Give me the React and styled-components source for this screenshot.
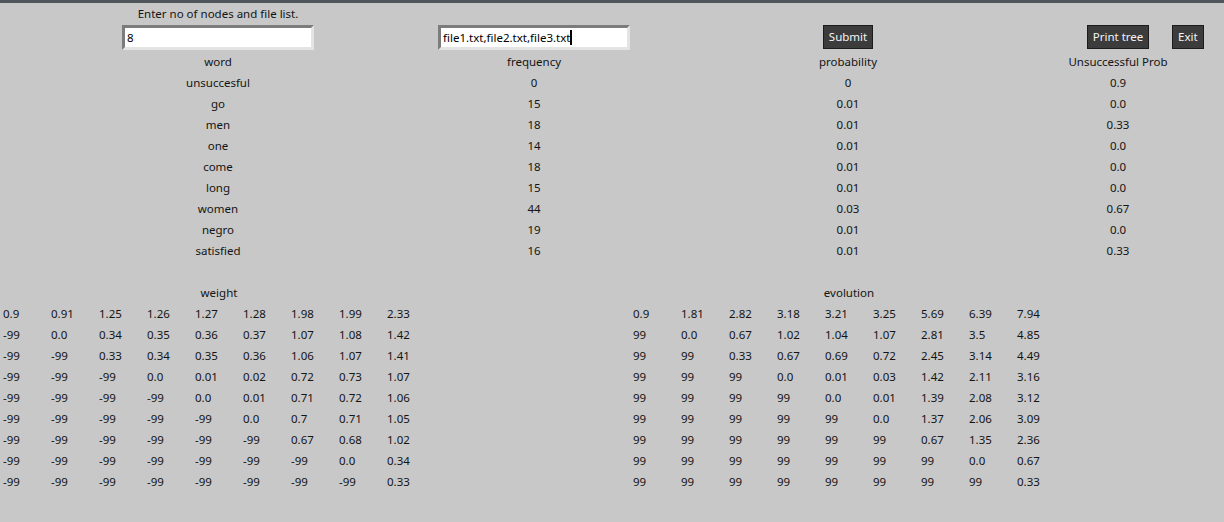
import React from 'react';
import styled, { createGlobalStyle } from 'styled-components';

const GlobalStyle = createGlobalStyle`
  html, body {
    margin: 0;
    padding: 0;
    background: #c8c8c8;
  }
  body {
    font-family: "Noto Sans", "Open Sans", "DejaVu Sans", sans-serif;
    font-size: 11.5px;
    color: #141414;
  }
`;

const Window = styled.div`
  width: 1224px;
  height: 522px;
  background: #c8c8c8;
  border-top: 3px solid #4f555b;
  box-sizing: border-box;
  overflow: hidden;
`;

const TopGrid = styled.div`
  display: grid;
  grid-template-columns: 436px 196px 432px 108px 1fr;
  grid-template-rows: 22px 26px;
  grid-auto-rows: 21px;
`;

const Cell = styled.div`
  display: flex;
  align-items: center;
  justify-content: center;
  white-space: nowrap;
  line-height: 1;
  grid-column: ${p => p.col || 'auto'};
`;

const Entry = styled.div`
  width: 184px;
  height: 19px;
  background: #fff;
  border: 3px solid;
  border-color: #7c7c7c #e4e4e4 #e4e4e4 #7c7c7c;
  display: flex;
  align-items: center;
  padding-left: 2px;
  box-sizing: content-box;
  font-size: 11.5px;
  color: #000;
  align-self: start;
`;

const Caret = styled.span`
  display: inline-block;
  width: 2px;
  height: 15px;
  background: #000;
`;

const Button = styled.div`
  background: #3c3c3c;
  color: #f4f4f4;
  border: 1px solid #1c1c1c;
  height: 24px;
  padding: 0 5px;
  display: flex;
  align-items: center;
  justify-content: center;
  box-sizing: border-box;
  font-size: 11.5px;
  line-height: 1;
  align-self: start;
`;

const ExitCell = styled.div`
  display: flex;
  align-items: flex-start;
  padding-left: 0;
`;

const Matrices = styled.div`
  display: grid;
  grid-template-columns: 432px 432px;
  column-gap: 198px;
  margin-top: 21px;
`;

const Matrix = styled.div`
  display: grid;
  grid-template-columns: repeat(9, 48px);
  grid-auto-rows: 21px;
`;

const MatrixTitle = styled.div`
  grid-column: 1 / -1;
  display: flex;
  align-items: center;
  justify-content: center;
  padding-left: 6px;
`;

const Num = styled.div`
  display: flex;
  align-items: center;
  padding-left: 3px;
  white-space: nowrap;
`;

const words = [
  ['unsuccesful', '0', '0', '0.9'],
  ['go', '15', '0.01', '0.0'],
  ['men', '18', '0.01', '0.33'],
  ['one', '14', '0.01', '0.0'],
  ['come', '18', '0.01', '0.0'],
  ['long', '15', '0.01', '0.0'],
  ['women', '44', '0.03', '0.67'],
  ['negro', '19', '0.01', '0.0'],
  ['satisfied', '16', '0.01', '0.33'],
];

const weight = [
  ['0.9', '0.91', '1.25', '1.26', '1.27', '1.28', '1.98', '1.99', '2.33'],
  ['-99', '0.0', '0.34', '0.35', '0.36', '0.37', '1.07', '1.08', '1.42'],
  ['-99', '-99', '0.33', '0.34', '0.35', '0.36', '1.06', '1.07', '1.41'],
  ['-99', '-99', '-99', '0.0', '0.01', '0.02', '0.72', '0.73', '1.07'],
  ['-99', '-99', '-99', '-99', '0.0', '0.01', '0.71', '0.72', '1.06'],
  ['-99', '-99', '-99', '-99', '-99', '0.0', '0.7', '0.71', '1.05'],
  ['-99', '-99', '-99', '-99', '-99', '-99', '0.67', '0.68', '1.02'],
  ['-99', '-99', '-99', '-99', '-99', '-99', '-99', '0.0', '0.34'],
  ['-99', '-99', '-99', '-99', '-99', '-99', '-99', '-99', '0.33'],
];

const evolution = [
  ['0.9', '1.81', '2.82', '3.18', '3.21', '3.25', '5.69', '6.39', '7.94'],
  ['99', '0.0', '0.67', '1.02', '1.04', '1.07', '2.81', '3.5', '4.85'],
  ['99', '99', '0.33', '0.67', '0.69', '0.72', '2.45', '3.14', '4.49'],
  ['99', '99', '99', '0.0', '0.01', '0.03', '1.42', '2.11', '3.16'],
  ['99', '99', '99', '99', '0.0', '0.01', '1.39', '2.08', '3.12'],
  ['99', '99', '99', '99', '99', '0.0', '1.37', '2.06', '3.09'],
  ['99', '99', '99', '99', '99', '99', '0.67', '1.35', '2.36'],
  ['99', '99', '99', '99', '99', '99', '99', '0.0', '0.67'],
  ['99', '99', '99', '99', '99', '99', '99', '99', '0.33'],
];

function NumberGrid({ title, rows }) {
  return (
    <Matrix>
      <MatrixTitle>{title}</MatrixTitle>
      {rows.map((row, i) =>
        row.map((v, j) => <Num key={`${i}-${j}`}>{v}</Num>)
      )}
    </Matrix>
  );
}

export default function App() {
  return (
    <Window>
      <GlobalStyle />
      <TopGrid>
        <Cell col="1">Enter no of nodes and file list.</Cell>
        <Cell col="2 / -1" />

        <Cell col="1"><Entry>8</Entry></Cell>
        <Cell col="2"><Entry>file1.txt,file2.txt,file3.txt<Caret /></Entry></Cell>
        <Cell col="3"><Button>Submit</Button></Cell>
        <Cell col="4"><Button>Print tree</Button></Cell>
        <ExitCell><Button>Exit</Button></ExitCell>

        <Cell col="1">word</Cell>
        <Cell col="2">frequency</Cell>
        <Cell col="3">probability</Cell>
        <Cell col="4">Unsuccessful Prob</Cell>
        <Cell col="5" />

        {words.map(w => (
          <React.Fragment key={w[0]}>
            <Cell col="1">{w[0]}</Cell>
            <Cell col="2">{w[1]}</Cell>
            <Cell col="3">{w[2]}</Cell>
            <Cell col="4">{w[3]}</Cell>
            <Cell col="5" />
          </React.Fragment>
        ))}
      </TopGrid>
      <Matrices>
        <NumberGrid title="weight" rows={weight} />
        <NumberGrid title="evolution" rows={evolution} />
      </Matrices>
    </Window>
  );
}
